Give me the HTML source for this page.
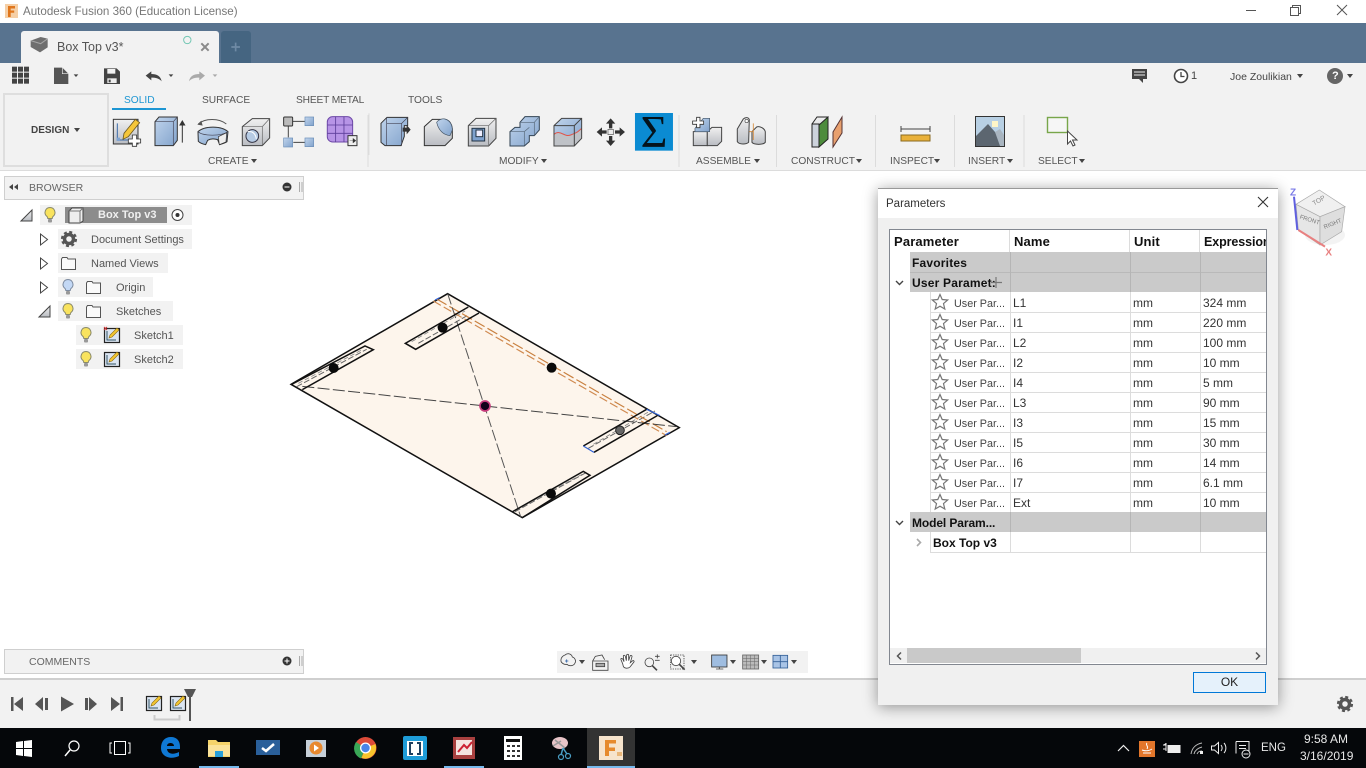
<!DOCTYPE html>
<html><head><meta charset="utf-8"><title>Autodesk Fusion 360</title>
<style>
html,body{margin:0;padding:0;width:1366px;height:768px;overflow:hidden;background:#fff;font-family:"Liberation Sans",sans-serif}
.a,.t{position:absolute}
.t{white-space:nowrap;line-height:14px;font-size:11px;color:#555}
.l{font-size:10.2px}
.r{position:absolute;left:890px;width:376px;height:20px;box-sizing:border-box}
.c{position:absolute;white-space:nowrap;font-size:12px;line-height:14px;color:#333;top:4px}
.u{left:64px;font-size:10.800px;color:#444;top:5px}
.b{position:absolute;white-space:nowrap;font-weight:bold;font-size:12px;letter-spacing:.2px;line-height:14px;color:#111}
.h{font-size:13px;letter-spacing:.15px;top:235px}
svg{position:absolute;overflow:visible}
</style></head><body>
<div class="a" style="left:0;top:0;width:1366px;height:23px;background:#fff"></div>
<div class="a" style="left:0;top:23px;width:1366px;height:40px;background:#58738f"></div>
<div class="a" style="left:21px;top:31px;width:198px;height:32px;background:#f2f2f2;border-radius:3px 3px 0 0"></div>
<div class="a" style="left:221px;top:31px;width:30px;height:32px;background:#456581;border-radius:3px 3px 0 0"></div>
<div class="a" style="left:0;top:63px;width:1366px;height:107px;background:#f2f2f2;border-bottom:1px solid #dcdcdc"></div>
<div class="a" style="left:3px;top:93px;width:102px;height:70px;border:2px solid #dedede"></div>
<div class="a" style="left:112px;top:108px;width:54px;height:2px;background:#1d96d3"></div>
<div class="a" style="left:4px;top:176px;width:298px;height:22px;background:#f2f2f2;border:1px solid #cfcfcf"></div>
<div class="a" style="left:4px;top:649px;width:298px;height:23px;background:#f2f2f2;border:1px solid #cfcfcf"></div>
<div class="a" style="left:0;top:678px;width:1366px;height:2px;background:#cfcfcf"></div>
<div class="a" style="left:0;top:680px;width:1366px;height:48px;background:#f2f2f2"></div>
<div class="a" style="left:0;top:728px;width:1366px;height:40px;background:#05070a"></div>
<div class="a" style="left:587px;top:728px;width:48px;height:40px;background:#333"></div>
<div class="a" style="left:199px;top:766px;width:40px;height:2px;background:#76b9ed"></div>
<div class="a" style="left:444px;top:766px;width:40px;height:2px;background:#76b9ed"></div>
<div class="a" style="left:587px;top:766px;width:48px;height:2px;background:#76b9ed"></div>
<div class="a" style="left:557px;top:651px;width:251px;height:22px;background:#f2f2f2"></div>
<!-- tree row backgrounds -->
<div class="a" style="left:40px;top:205px;width:152px;height:20px;background:#f2f2f2"></div>
<div class="a" style="left:65px;top:207px;width:102px;height:16px;background:#8c8c8c"></div>
<div class="a" style="left:58px;top:229px;width:134px;height:20px;background:#f2f2f2"></div>
<div class="a" style="left:58px;top:253px;width:110px;height:20px;background:#f2f2f2"></div>
<div class="a" style="left:58px;top:277px;width:95px;height:20px;background:#f2f2f2"></div>
<div class="a" style="left:58px;top:301px;width:115px;height:20px;background:#f2f2f2"></div>
<div class="a" style="left:76px;top:325px;width:107px;height:20px;background:#f2f2f2"></div>
<div class="a" style="left:76px;top:349px;width:107px;height:20px;background:#f2f2f2"></div>

<svg style="left:0;top:0" width="1366" height="768" viewBox="0 0 1366 768">
<defs>
<linearGradient id="bl" x1="0" y1="0" x2="1" y2="1"><stop offset="0" stop-color="#c0d4ec"/><stop offset="1" stop-color="#82a3cc"/></linearGradient>
<linearGradient id="gr" x1="0" y1="0" x2="0" y2="1"><stop offset="0" stop-color="#f0f0f0"/><stop offset="1" stop-color="#b9bcc2"/></linearGradient>
<g id="bulbY"><path d="M0-7.5a5 5 0 0 1 3.2 8.8c-.8.7-1 1.4-1 2.2h-4.400c0-.8-.2-1.500-1-2.200A5 5 0 0 1 0-7.500z" fill="#f9e35e" stroke="#8a8a6a"/><rect x="-2" y="4" width="4" height="3.500" rx="1" fill="#999"/></g>
<g id="bulbB"><path d="M0-7.5a5 5 0 0 1 3.2 8.800c-.8.700-1 1.400-1 2.200h-4.400c0-.8-.2-1.500-1-2.200A5 5 0 0 1 0-7.500z" fill="#c3d8f5" stroke="#7d8ba0"/><rect x="-2" y="4" width="4" height="3.500" rx="1" fill="#999"/></g>
<path id="fold" d="M.5 2V12.500H14.500V2H7L6 .5H1.500z" fill="#fafafa" stroke="#555"/>
<g id="ske"><rect x=".5" y="1.500" width="15" height="14" fill="#dbe5f2" stroke="#222" stroke-width="1.200"/><path d="M3 4V13H12" fill="none" stroke="#356" stroke-width="1"/><path d="M5 11l1-3 7-7 2 2-7 7z" fill="#f3c631" stroke="#8a6a10" stroke-width=".6"/></g>
<path id="car" d="M0 0h6l-3 4z" fill="#444"/>
</defs>

<!-- app icon / tab -->
<rect x="5" y="4" width="13" height="14" fill="#f5cfa6"/><path d="M8 6h7v2.500h-4.300v2h3.500v2.300h-3.500V17H8z" fill="#e0761c"/>
<g transform="scale(.3333)">
<path d="M92 122l30-11 21 5v26l-23 15-28-16z" fill="#6e6e6e"/><path d="M92 122l30 9 21-15" fill="none" stroke="#a5a5a5" stroke-width="3"/>
<circle cx="562" cy="120" r="11" fill="none" stroke="#74c7b4" stroke-width="3"/>
<path d="M604 130l22 22M626 130l-22 22" stroke="#8a8a8a" stroke-width="6"/>
<path d="M707 128v26M694 141h26" stroke="#6f8aa5" stroke-width="5"/>
<g fill="#444"><rect x="36" y="200" width="15" height="15"/><rect x="54" y="200" width="15" height="15"/><rect x="72" y="200" width="15" height="15"/><rect x="36" y="218" width="15" height="15"/><rect x="54" y="218" width="15" height="15"/><rect x="72" y="218" width="15" height="15"/><rect x="36" y="236" width="15" height="15"/><rect x="54" y="236" width="15" height="15"/><rect x="72" y="236" width="15" height="15"/></g>
<path d="M162 203h25l18 18v31h-43z" fill="#555"/><path d="M187 203v18h18" fill="none" stroke="#eee" stroke-width="2"/><path d="M221 223h14l-7 8z" fill="#444"/>
<path d="M312 205h38l10 10v37h-48z" fill="#444"/><rect x="322" y="207" width="24" height="14" fill="#f2f2f2"/><rect x="322" y="235" width="28" height="14" fill="#eee"/><rect x="326" y="239" width="6" height="8" fill="#444"/>
<path d="M437 227l17-13v8c16 0 28 6 31 22-8-9-17-11-31-11v8z" fill="#444"/><path d="M506 223h14l-7 8z" fill="#444"/>
<path d="M615 227l-17-13v8c-16 0-28 6-31 22 8-9 17-11 31-11v8z" fill="#aaa"/><path d="M638 223h14l-7 8z" fill="#aaa"/>

<!-- sketch -->
<rect x="340" y="358" width="74" height="74" fill="url(#gr)" stroke="#333" stroke-width="3"/>
<path d="M352 370v50h50" fill="none" stroke="#3a6aa8" stroke-width="3"/><rect x="350" y="413" width="10" height="10" fill="#7fa4d2"/>
<path d="M372 400l34-42 13 10-34 42-16 8z" fill="#f5c63a" stroke="#6e5a20" stroke-width="2.500"/>
<path d="M397 405h13v12h12v12h-12v10h-13v-10h-12v-12h12z" fill="#fff" stroke="#333" stroke-width="2.500"/>
<!-- extrude -->
<path d="M465 365l12-14h55v70l-12 16h-55z" fill="url(#bl)" stroke="#333" stroke-width="3"/><path d="M465 365h55v72M520 365l12-14" fill="none" stroke="#445" stroke-width="2"/>
<path d="M547 428v-62M540 375l7-12 7 12z" stroke="#333" stroke-width="3" fill="#333"/>
<!-- revolve -->
<path d="M595 372c20-18 62-18 84 0" fill="none" stroke="#555" stroke-width="3"/><path d="M604 362l-12 12 16 3z" fill="#555"/>
<path d="M594 395c20-18 70-18 90 0l-3 30c-8 5-16 7-22 9l-6-15c-12-4-22-3-30 2l-6 13c-10-2-18-6-22-10z" fill="url(#bl)" stroke="#333" stroke-width="3"/><path d="M594 395c15 14 70 14 90 0" fill="none" stroke="#445" stroke-width="2"/>
<path d="M655 410l25-12-2 28-20 8z" fill="#eee" stroke="#333" stroke-width="2"/>
<!-- hole -->
<path d="M727 380l30-24h52v58l-22 23h-60z" fill="url(#gr)" stroke="#444" stroke-width="3"/><path d="M727 380h60v57M787 380l22-24" fill="none" stroke="#666" stroke-width="2"/><circle cx="757" cy="408" r="19" fill="#b6cbe4" stroke="#334" stroke-width="3"/><path d="M743 395c14-3 24 6 26 22" fill="none" stroke="#fff" stroke-width="3"/>
<!-- joints -->
<path d="M878 364h38M865 378v34M880 427h36" stroke="#444" stroke-width="3"/>
<rect x="851" y="351" width="27" height="27" rx="3" fill="#bbb" stroke="#333" stroke-width="3"/><rect x="915" y="351" width="26" height="26" fill="url(#bl)" stroke="#6b8eb8" stroke-width="2"/><rect x="851" y="414" width="27" height="27" fill="url(#bl)" stroke="#6b8eb8" stroke-width="2"/><rect x="915" y="414" width="26" height="26" fill="url(#bl)" stroke="#6b8eb8" stroke-width="2"/>
<!-- form -->
<rect x="982" y="350" width="76" height="76" rx="16" fill="#b794e6" stroke="#6e4aa8" stroke-width="3"/>
<path d="M982 375h76M982 400h76M1007 350v76M1032 350v76" stroke="#5c3d99" stroke-width="2.500"/>
<rect x="1044" y="407" width="27" height="30" fill="#eee" stroke="#333" stroke-width="3"/><path d="M1049 422h10v-7l9 7-9 7v-7" fill="#333" stroke="#333"/>
<path d="M1107 340v125" stroke="#dcdcdc" stroke-width="3"/>
</g>

<g transform="translate(370,85) scale(.3333)">
<!-- press pull -->
<path d="M33 115l18-18h62v25l-10 0v32l-10 28H45l-12-10z" fill="url(#bl)" stroke="#333" stroke-width="3"/><path d="M50 97v85M50 115h45v67M95 115l18-18" fill="none" stroke="#445" stroke-width="2"/><path d="M98 128h12v-8l12 14-12 14v-8H98z" fill="#333"/>
<!-- fillet -->
<path d="M163 125L187 103H222C238 103 247 118 247 135V160L225 182H163Z" fill="url(#gr)" stroke="#333" stroke-width="3"/>
<path d="M200 112C205 104 218 100 225 102C240 106 247 120 247 135L240 152C220 150 205 135 200 112Z" fill="url(#bl)" stroke="#456" stroke-width="2"/>
<!-- shell -->
<path d="M295 122l23-22h60v60l-22 23h-61z" fill="url(#gr)" stroke="#444" stroke-width="3"/><path d="M295 122h61v61M356 122l22-22" fill="none" stroke="#666" stroke-width="2"/><rect x="306" y="130" width="38" height="38" fill="#7ea1cd" stroke="#234" stroke-width="3"/><rect x="318" y="135" width="20" height="20" fill="#eef" stroke="#234" stroke-width="3"/>
<!-- combine -->
<path d="M420 140l15-13h15v-15l15-17h43v40l-15 17h-15v18l-15 13h-43z" fill="url(#bl)" stroke="#345" stroke-width="3"/><path d="M420 140h43v42M450 112h43v40M463 140l15-13M493 112l15-17" fill="none" stroke="#567" stroke-width="2"/>
<!-- replace face -->
<path d="M552 122l23-22h60v60l-22 23h-61z" fill="url(#bl)"/><path d="M552 148c20-16 30 10 50 2s20-8 33-20v30l-22 23h-61z" fill="#bfc2c7"/><path d="M552 148c20-16 30 10 50 2s20-8 33-20" fill="none" stroke="#e0554a" stroke-width="3"/><path d="M552 122l23-22h60v60l-22 23h-61zM552 122h61v61M613 122l22-22" fill="none" stroke="#444" stroke-width="3"/>
<!-- move -->
<path d="M722 100l14 16h-9v14h-10v-14h-9zM722 183l14-16h-9v-14h-10v14h-9zM680 141l16-14v9h14v10h-14v9zM765 141l-16-14v9h-14v10h14v9z" fill="#333"/><rect x="714" y="133" width="16" height="16" fill="#eee" stroke="#555" stroke-width="2"/>
<rect x="795" y="84" width="114" height="113" fill="#0b8bd2"/>
<!-- assemble -->
<path d="M970 140h42v42h-42z" fill="url(#gr)" stroke="#444" stroke-width="3"/><path d="M1012 140l14-13h29v42l-13 13h-30z" fill="url(#gr)" stroke="#444" stroke-width="3"/><path d="M1000 100h19v40h-44v-10z" fill="url(#bl)" stroke="#456" stroke-width="2"/><path d="M980 97h10v11h11v10h-11v10h-10v-10h-12v-10h12z" fill="#fff" stroke="#333" stroke-width="2.500"/>
<!-- joint -->
<path d="M1102 170v-38l18-30c6-6 16-6 18 2l-2 68c-6 6-28 8-34-2z" fill="url(#gr)" stroke="#444" stroke-width="3"/><path d="M1146 172v-32l14-14c8-4 24 4 26 14v32c-6 8-34 8-40 0z" fill="url(#gr)" stroke="#444" stroke-width="3"/><path d="M1138 140h12M1150 115v50" stroke="#d58a3a" stroke-width="2.500"/>
<circle cx="1130" cy="108" r="5" fill="#fff" stroke="#444" stroke-width="2"/>
</g>
<path d="M679 115v52M368 115v52M776.500 115v52M875.500 115v52M954.500 115v52M1024 115v52" stroke="#dcdcdc" stroke-width="1"/>

<!-- construct -->
<path d="M812 124l5-7h11l-1 22-9 8h-6z" fill="url(#gr)" stroke="#222" stroke-width="1"/><path d="M819 125l9-8v22l-9 8z" fill="#4d8c3c" stroke="#222"/><rect x="812" y="124" width="7" height="23" fill="#cdd3dc" stroke="#222"/>
<path d="M833 147v-15l9-15v16z" fill="#e8a06e" stroke="#533" stroke-width="1"/>
<!-- inspect -->
<path d="M901 129h29M901 126v6M930 126v6" stroke="#444" stroke-width="1"/><rect x="901" y="135" width="29" height="6" fill="#e9b13a" stroke="#8a6a20"/>
<!-- insert -->
<rect x="975.500" y="116.500" width="29" height="30" fill="#b8d0e4" stroke="#333"/><path d="M976 146v-10l12-12 7 8 9 10v4z" fill="#5c6670"/><path d="M995 132l5-3 4 6v11h-4z" fill="#a9b5c0"/><rect x="992" y="121" width="6" height="6" fill="#fff6c8"/>
<!-- select -->
<rect x="1047.500" y="117.500" width="20" height="15" fill="#f6f6f6" stroke="#78a64a" stroke-width="1.400"/>
<path d="M1067.500 131v13l3-3 2.500 5 2-1-2.500-5h4.500z" fill="#fff" stroke="#444"/>

<!-- top right -->
<path d="M1132 69h15v10h-4v4l-4-4h-7z" fill="#444"/><path d="M1134 72h11M1134 75h11" stroke="#eee"/>
<circle cx="1181" cy="76" r="6.500" fill="#fff" stroke="#444" stroke-width="1.600"/><path d="M1181 72v4.500h3.500" fill="none" stroke="#444" stroke-width="1.300"/>
<use href="#car" x="1297" y="74"/>
<circle cx="1335" cy="76" r="8" fill="#666"/><use href="#car" x="1347" y="74"/>
<!-- window controls -->
<path d="M1246 10.500h10" stroke="#555"/><rect x="1292.500" y="5.500" width="8" height="8" fill="none" stroke="#555"/><rect x="1290.500" y="7.500" width="8" height="8" fill="#fff" stroke="#555"/>
<path d="M1337 5l10 10M1347 5l-10 10" stroke="#555"/>

<!-- design/labels carets -->
<use href="#car" x="74" y="128"/><use href="#car" x="251" y="159"/><use href="#car" x="541" y="159"/><use href="#car" x="754" y="159"/><use href="#car" x="856" y="159"/><use href="#car" x="934" y="159"/><use href="#car" x="1007" y="159"/><use href="#car" x="1079" y="159"/>

<!-- browser -->
<path d="M9 187l4-3v6zM14 187l4-3v6z" fill="#444"/><circle cx="287" cy="187" r="4.500" fill="#333"/><path d="M284.500 187h5" stroke="#fff"/><path d="M299.500 182v10M302 182v10" stroke="#aaa"/>
<circle cx="287" cy="661" r="4.500" fill="#333"/><path d="M284.500 661h5M287 658.500v5" stroke="#fff"/><path d="M299.500 656v10M302 656v10" stroke="#aaa"/>
<!-- tree -->
<path d="M21 221l11-11v11z" fill="url(#gr)" stroke="#444"/>
<use href="#bulbY" x="50" y="215"/>
<path d="M69 211l3-3h11v13l-3 2H69z" fill="#eee" stroke="#444"/><path d="M69 211h11v12M80 211l3-3" fill="none" stroke="#777"/>
<circle cx="177.500" cy="215" r="5.500" fill="#fff" stroke="#444"/><circle cx="177.500" cy="215" r="2" fill="#333"/>
<path d="M40.500 234v11l7-5.500z" fill="#fff" stroke="#444"/><path d="M40.500 258v11l7-5.500z" fill="#fff" stroke="#444"/><path d="M40.500 282v11l7-5.500z" fill="#fff" stroke="#444"/>
<path d="M39 317l11-11v11z" fill="url(#gr)" stroke="#444"/>
<circle cx="69" cy="239" r="4.500" fill="none" stroke="#555" stroke-width="3.500"/><circle cx="69" cy="239" r="7" fill="none" stroke="#555" stroke-width="2.200" stroke-dasharray="3 2.500"/>
<use href="#fold" x="61" y="257"/>
<use href="#bulbB" x="68" y="287"/><use href="#fold" x="86" y="281"/>
<use href="#bulbY" x="68" y="311"/><use href="#fold" x="86" y="305"/>
<use href="#bulbY" x="86" y="335"/><use href="#ske" x="104" y="327"/><path d="M104 327l3 3M107 327l-3 3" stroke="#c33"/>
<use href="#bulbY" x="86" y="359"/><use href="#ske" x="104" y="351"/>

<!-- model -->
<g transform="translate(285,285) scale(.3333)">
<path d="M488 26L1183 428 712 698 18 298z" fill="#fdf5ec" stroke="#111" stroke-width="4.500" stroke-linejoin="miter"/>
<g stroke-width="3" fill="none">
<path d="M35 305l210-112M400 175l150-85M690 680l215-118M910 490l200-112" stroke-dasharray="18 7" stroke="#666" stroke-width="3"/>
<path d="M40 295l190-100M380 170l160-92M705 668l190-102M925 478l170-100" stroke-dasharray="14 8" stroke="#888" stroke-width="2.500"/>
</g>
<path d="M445 48L1145 452" stroke="#d08a50" stroke-width="3.500" stroke-dasharray="26 10" fill="none"/>
<path d="M455 42L1145 440" stroke="#c9803f" stroke-width="3.500" stroke-dasharray="34 10" fill="none"/>
<path d="M52 304L1175 425" stroke="#444" stroke-width="3" stroke-dasharray="36 10" fill="none"/>
<path d="M488 26L707 695" stroke="#555" stroke-width="3" stroke-dasharray="34 9" fill="none"/>
<g fill="none" stroke="#111" stroke-width="4.500">
<path d="M550 66L361 175l31 18L582 84"/>
<path d="M20 298L240 183l25 11L52 314"/>
<path d="M683 680L895 559l20 12L712 698"/>
<path d="M1085 373L895 483M927 502L1117 392"/>
</g>
<path d="M895 483l32 19M1085 373l40 19M1140 450l15-8M450 45l14-7" stroke="#2f62d8" stroke-width="3.500" fill="none"/>
<circle cx="146" cy="249" r="15" fill="#0a0a0a"/><circle cx="473" cy="128" r="15" fill="#0a0a0a"/><circle cx="800" cy="248" r="15" fill="#0a0a0a"/><circle cx="798" cy="626" r="15" fill="#0a0a0a"/>
<circle cx="1005" cy="436" r="13" fill="#666" stroke="#222" stroke-width="3"/>
<circle cx="600" cy="363" r="15" fill="#12001a" stroke="#c73b7c" stroke-width="5"/>
</g>

<!-- viewcube -->
<g transform="translate(1270,175) scale(.3333)">
<ellipse cx="165" cy="180" rx="60" ry="30" fill="#eee" opacity=".7"/>
<path d="M78 88L148 45 225 95 150 125z" fill="#f0f0f0" stroke="#aaa" stroke-width="2"/>
<path d="M78 88L150 125 150 210 85 165z" fill="#e6e6e6" stroke="#aaa" stroke-width="2"/>
<path d="M150 125L225 95 215 170 150 210z" fill="#dedede" stroke="#aaa" stroke-width="2"/>
<path d="M72 65L82 165" stroke="#6060e0" stroke-width="6"/><path d="M85 165L165 215" stroke="#e88080" stroke-width="6"/>
<text x="60" y="62" font-size="30" font-weight="bold" fill="#7b7be8" font-family="Liberation Sans">Z</text>
<text x="166" y="242" font-size="30" font-weight="bold" fill="#e88080" font-family="Liberation Sans">X</text>
<text transform="translate(132,92) rotate(-30)" font-size="20" fill="#888" font-family="Liberation Sans">TOP</text>
<text transform="translate(88,130) rotate(18)" font-size="18" fill="#777" font-family="Liberation Sans">FRONT</text>
<text transform="translate(164,162) rotate(-22)" font-size="18" fill="#777" font-family="Liberation Sans">RIGHT</text>
</g>

<!-- view bar -->
<g transform="translate(550,645) scale(.3333)" fill="none" stroke="#444" stroke-width="2.500">
<path d="M45 30c10-8 20-2 22 6 8 2 12 12 8 18-4 10-18 10-24 4-10 2-20-6-18-14 0-6 6-12 12-14z"/><path d="M45 48h10M50 43v10" stroke="#36a"/>
<path d="M128 48h46v28h-46zM128 48l8-14 20-4 8 14"/><rect x="138" y="55" width="26" height="10" fill="#aaa"/>
<path d="M218 56l-5-12c-2-4 3-5 5-2l4 8-2-16c0-4 5-4 6 0l3 13 1-16c0-4 6-4 6 0l0 16 4-13c1-4 7-3 6 1l-5 18 6-5c4-3 7 1 4 4l-11 14c-5 5-17 5-20-2z" fill="#fff"/>
<circle cx="298" cy="52" r="13"/><path d="M307 62l14 14" stroke-width="5"/><path d="M315 34h14M322 28v12M315 46h14"/>
<rect x="362" y="30" width="40" height="42" stroke-dasharray="4 3"/><circle cx="378" cy="48" r="14" fill="#fff" stroke="#444"/><path d="M388 58l16 16" stroke-width="5"/>
<rect x="485" y="30" width="46" height="36" fill="#9fbde0" stroke="#333"/><path d="M498 72h22M508 66v6"/>
<rect x="578" y="30" width="48" height="42" fill="#bbb" stroke="#666"/><path d="M590 30v42M602 30v42M614 30v42M578 40h48M578 50h48M578 60h48" stroke="#666" stroke-width="1.500"/>
<rect x="669" y="31" width="44" height="38" fill="#a9c4e6" stroke="#335f96"/><path d="M691 31v38M669 50h44" stroke="#335f96"/>
</g>
<use href="#car" x="579" y="660"/><use href="#car" x="691" y="660"/><use href="#car" x="730" y="660"/><use href="#car" x="761" y="660"/><use href="#car" x="791" y="660"/>

<!-- timeline -->
<g fill="#555">
<path d="M11 697h2.500v14H11zM23 697v14l-9-7z"/><path d="M35 704l8-7v14zM45 698h3v12h-3z"/><path d="M61 696.500l13 7.500-13 7.500z"/><path d="M85 698h3v12h-3zM89 697l8 7-8 7z"/><path d="M111 697l9 7-9 7zM120.500 697h2.500v14h-2.500z"/>
</g>
<use href="#ske" x="146" y="695"/><use href="#ske" x="170" y="695"/>
<path d="M154.500 715v4.500h25v-4.500" fill="none" stroke="#ccc" stroke-width="2"/>
<path d="M184 689h12l-4 8h-4z" fill="#555"/><rect x="189" y="694" width="2" height="27" fill="#555"/>
<circle cx="1345" cy="704" r="4.500" fill="none" stroke="#555" stroke-width="3.500"/><circle cx="1345" cy="704" r="7" fill="none" stroke="#555" stroke-width="2.200" stroke-dasharray="3 2.500"/>

<!-- taskbar -->
<path d="M16 742l7-1v7h-7zM24 741l8-1v8h-8zM16 749h7v7l-7-1zM24 749h8v8l-8-1z" fill="#fff"/>
<circle cx="74" cy="746" r="5" fill="none" stroke="#fff" stroke-width="1.200"/><path d="M70 750l-5 6" stroke="#fff" stroke-width="1.500"/>
<rect x="114.500" y="741.500" width="11" height="13" fill="none" stroke="#fff"/><path d="M112 743h-2v10h2M128 743h2v10h-2" fill="none" stroke="#fff"/>
<path d="M161 748c0-7 4-11 10-11 6 0 9 4 9 10v2h-13c.5 5 6 6 12 3v4c-8 4-18 1-18-8zm6-2h7c0-4-7-4-7 0z" fill="#0f78d4"/>
<path d="M208 740h8l2 2h12v15h-22z" fill="#f5d36a"/><rect x="208" y="745" width="22" height="11" fill="#fbe39a"/><rect x="215" y="751" width="8" height="6" fill="#2aa0d8"/>
<rect x="256" y="740" width="24" height="15" fill="#2a5f9a"/><path d="M262 748l4 3 8-7" fill="none" stroke="#fff" stroke-width="2.500"/>
<rect x="306" y="740" width="20" height="17" fill="#c6cfd8"/><circle cx="316" cy="748" r="6.500" fill="#e8892f"/><path d="M314 744.500l5 3.500-5 3.500z" fill="#fff"/>
<circle cx="365.500" cy="748" r="11" fill="#dd4b39"/><path d="M365.500 748L356 742a11 11 0 0 0 5 16.500z" fill="#3aa757"/><path d="M365.500 748l10-4a11 11 0 0 1-14 14z" fill="#f8c42c"/><path d="M365.500 748l-5 9a11 11 0 0 1-6-11z" fill="#3aa757"/><circle cx="365.500" cy="748" r="5.500" fill="#fff"/><circle cx="365.500" cy="748" r="4.200" fill="#4a85e8"/>
<rect x="403" y="736" width="24" height="24" rx="2" fill="#1e9cd8"/><rect x="407" y="741" width="16" height="15" fill="#fff"/><path d="M413 743h-3v11h3M417 743h3v11h-3" fill="none" stroke="#1d3f5f" stroke-width="2"/>
<rect x="453" y="737" width="22" height="22" fill="#a8403f"/><rect x="456" y="740" width="16" height="15" fill="#f4e4e0"/><path d="M458 752l6-7 3 3 5-6" stroke="#c23" stroke-width="2" fill="none"/>
<rect x="504" y="736" width="18" height="24" fill="#fff"/><rect x="506" y="739" width="14" height="3" fill="#111"/><g fill="#333"><rect x="507" y="745" width="3" height="2"/><rect x="512" y="745" width="3" height="2"/><rect x="517" y="745" width="3" height="2"/><rect x="507" y="750" width="3" height="2"/><rect x="512" y="750" width="3" height="2"/><rect x="517" y="750" width="3" height="2"/><rect x="507" y="755" width="3" height="2"/><rect x="512" y="755" width="3" height="2"/><rect x="517" y="755" width="3" height="2"/></g>
<ellipse cx="560" cy="743" rx="8" ry="6" fill="#e8c4c8"/><path d="M553 746l8-5M555 740l10 8" stroke="#999" stroke-width="1.500"/><path d="M563 748l4 6M563 748l-2 7" stroke="#4a9ec4" stroke-width="1.500"/><circle cx="568" cy="756" r="2.500" fill="none" stroke="#4a9ec4" stroke-width="1.200"/><circle cx="561" cy="757" r="2.500" fill="none" stroke="#4a9ec4" stroke-width="1.200"/>
<rect x="599" y="736" width="24" height="24" fill="#f6e3cc"/><path d="M605 740h11v3.500h-7v4h6v3.500h-6v5h-4z" fill="#e68a2e"/><rect x="617" y="752" width="5" height="4" fill="#e9b679"/>

<!-- tray -->
<path d="M1118 751l5.500-5.500 5.500 5.500" fill="none" stroke="#eee" stroke-width="1.200"/>
<rect x="1139" y="741" width="16" height="16" fill="#e2762b"/><path d="M1143 753h8M1142 750c3 1 7 1 10-1M1147 743c-2 2 2 3 0 6" stroke="#fff" fill="none"/>
<path d="M1163 745h3v-2M1163 749h3M1166 743v8" fill="#eee" stroke="#eee"/><rect x="1168" y="745.500" width="12" height="7" fill="#eee" stroke="#eee"/>
<path d="M1191 754c1-6 5-10 11-11M1194 754c1-4 4-6 8-7M1197 754c1-2 2-3 5-3" stroke="#bbb" fill="none"/><rect x="1200" y="751" width="3" height="3" fill="#eee"/>
<path d="M1211.500 746h3l4-3.500v11l-4-3.500h-3zM1221 745c1.500 2 1.500 4 0 6M1224 743c2.500 3 2.500 7 0 10" stroke="#eee" fill="none"/>
<path d="M1236 741.500h13v13h-7M1239 745.500h7M1239 748.500h7M1236 741.500v12" stroke="#eee" fill="none"/><circle cx="1246" cy="754" r="4" fill="#05070a" stroke="#eee"/><path d="M1243.500 754h5" stroke="#eee"/>
</svg>

<!-- texts -->
<div class="t" style="left:23px;top:5px;font-size:11.600px;color:#777">Autodesk Fusion 360 (Education License)</div>
<div class="t" style="left:57px;top:40px;font-size:12.500px;color:#555">Box Top v3*</div>
<div class="t" style="left:31px;top:124px;font-weight:bold;font-size:10px;color:#444">DESIGN</div>
<div class="t l" style="left:124px;top:94px;color:#1d96d3">SOLID</div>
<div class="t l" style="left:202px;top:94px">SURFACE</div>
<div class="t l" style="left:296px;top:94px;letter-spacing:-.15px">SHEET METAL</div>
<div class="t l" style="left:408px;top:94px">TOOLS</div>
<div class="t l" style="left:208px;top:155px">CREATE</div>
<div class="t l" style="left:499px;top:155px">MODIFY</div>
<div class="t l" style="left:696px;top:155px">ASSEMBLE</div>
<div class="t l" style="left:791px;top:155px">CONSTRUCT</div>
<div class="t l" style="left:890px;top:155px">INSPECT</div>
<div class="t l" style="left:968px;top:155px">INSERT</div>
<div class="t l" style="left:1038px;top:155px">SELECT</div>
<div class="t" style="left:635px;top:113px;width:38px;height:38px;line-height:38px;text-align:center;font-family:'Liberation Serif',serif;font-size:46px;color:#05131c">Σ</div>
<div class="t" style="left:1191px;top:69px;color:#444">1</div>
<div class="t" style="left:1230px;top:70px;font-size:10.500px;color:#444">Joe Zoulikian</div>
<div class="t" style="left:1332px;top:69px;font-weight:bold;font-size:11px;color:#fff">?</div>
<div class="t" style="left:29px;top:181px;font-size:10.500px;color:#666">BROWSER</div>
<div class="t" style="left:29px;top:655px;font-size:10.500px;color:#666">COMMENTS</div>
<div class="t" style="left:98px;top:208px;font-weight:bold;color:#f0f0f0">Box Top v3</div>
<div class="t" style="left:91px;top:233px">Document Settings</div>
<div class="t" style="left:91px;top:257px">Named Views</div>
<div class="t" style="left:116px;top:281px">Origin</div>
<div class="t" style="left:116px;top:305px">Sketches</div>
<div class="t" style="left:134px;top:329px">Sketch1</div>
<div class="t" style="left:134px;top:353px">Sketch2</div>
<div class="t" style="left:1261px;top:741px;font-size:11.500px;color:#e8e8e8">ENG</div>
<div class="t" style="left:1304px;top:732px;font-size:12px;color:#e8e8e8">9:58 AM</div>
<div class="t" style="left:1300px;top:749px;font-size:12px;color:#e8e8e8">3/16/2019</div>

<!-- dialog -->
<div class="a" style="left:878px;top:188px;width:400px;height:517px;background:#f0f0f0;box-shadow:0 2px 14px rgba(0,0,0,.4);border-top:1px solid #999;box-sizing:border-box">
<div class="a" style="left:-878px;top:-189px;width:1366px;height:768px">
<div class="a" style="left:878px;top:189px;width:400px;height:29px;background:#fff"></div>
<div class="t" style="left:886px;top:197px;font-size:11.500px;color:#333">Parameters</div>
<svg style="left:0;top:0" width="1366" height="768"><path d="M1258 197l10 10M1268 197l-10 10" stroke="#333" stroke-width="1.100"/></svg>
<div class="a" style="left:889px;top:229px;width:376px;height:434px;border:1px solid #828790;background:#fff;overflow:hidden">
<div class="a" style="left:-890px;top:-230px;width:1366px;height:768px">
<div class="b h" style="left:894px">Parameter</div>
<div class="b h" style="left:1014px">Name</div>
<div class="b h" style="left:1134px">Unit</div>
<div class="b h" style="left:1204px;letter-spacing:-.1px;font-size:12.500px">Expression</div>
<div class="a" style="left:1009px;top:230px;width:1px;height:22px;background:#dcdcdc"></div>
<div class="a" style="left:1129px;top:230px;width:1px;height:22px;background:#dcdcdc"></div>
<div class="a" style="left:1199px;top:230px;width:1px;height:22px;background:#dcdcdc"></div>

<div class="a" style="left:910px;top:252px;width:360px;height:40px;background:#cacaca"></div>
<div class="a" style="left:910px;top:512px;width:360px;height:20px;background:#cacaca"></div>
<div class="a" style="left:910px;top:272px;width:360px;height:1px;background:#b9b9b9"></div>
<div class="b" style="left:912px;top:256px">Favorites</div>
<div class="b" style="left:912px;top:276px">User Paramet:</div>
<div class="b" style="left:912px;top:516px;letter-spacing:-.1px">Model Param...</div>
<div class="b" style="left:933px;top:536px;letter-spacing:0">Box Top v3</div>

<div class="a" style="left:1010px;top:252px;width:1px;height:300px;background:#dcdcdc"></div>
<div class="a" style="left:1130px;top:252px;width:1px;height:300px;background:#dcdcdc"></div>
<div class="a" style="left:1200px;top:252px;width:1px;height:300px;background:#dcdcdc"></div>
<div class="a" style="left:930px;top:292px;width:1px;height:220px;background:#dcdcdc"></div>
<div class="a" style="left:930px;top:532px;width:1px;height:20px;background:#dcdcdc"></div>
<div class="a" style="left:1010px;top:252px;width:1px;height:40px;background:#b5b5b5"></div>
<div class="a" style="left:1130px;top:252px;width:1px;height:40px;background:#b5b5b5"></div>
<div class="a" style="left:1200px;top:252px;width:1px;height:40px;background:#b5b5b5"></div>
<div class="a" style="left:1010px;top:512px;width:1px;height:20px;background:#b5b5b5"></div>
<div class="a" style="left:1130px;top:512px;width:1px;height:20px;background:#b5b5b5"></div>
<div class="a" style="left:1200px;top:512px;width:1px;height:20px;background:#b5b5b5"></div>
<div class="a" style="left:930px;top:312px;width:340px;height:1px;background:#dcdcdc"></div>
<div class="a" style="left:930px;top:332px;width:340px;height:1px;background:#dcdcdc"></div>
<div class="a" style="left:930px;top:352px;width:340px;height:1px;background:#dcdcdc"></div>
<div class="a" style="left:930px;top:372px;width:340px;height:1px;background:#dcdcdc"></div>
<div class="a" style="left:930px;top:392px;width:340px;height:1px;background:#dcdcdc"></div>
<div class="a" style="left:930px;top:412px;width:340px;height:1px;background:#dcdcdc"></div>
<div class="a" style="left:930px;top:432px;width:340px;height:1px;background:#dcdcdc"></div>
<div class="a" style="left:930px;top:452px;width:340px;height:1px;background:#dcdcdc"></div>
<div class="a" style="left:930px;top:472px;width:340px;height:1px;background:#dcdcdc"></div>
<div class="a" style="left:930px;top:492px;width:340px;height:1px;background:#dcdcdc"></div>
<div class="a" style="left:930px;top:552px;width:340px;height:1px;background:#dcdcdc"></div>

<div class="r" style="top:292px"><span class="c u">User Par...</span><span class="c" style="left:123px">L1</span><span class="c" style="left:243px">mm</span><span class="c" style="left:313px">324 mm</span></div>
<div class="r" style="top:312px"><span class="c u">User Par...</span><span class="c" style="left:123px">I1</span><span class="c" style="left:243px">mm</span><span class="c" style="left:313px">220 mm</span></div>
<div class="r" style="top:332px"><span class="c u">User Par...</span><span class="c" style="left:123px">L2</span><span class="c" style="left:243px">mm</span><span class="c" style="left:313px">100 mm</span></div>
<div class="r" style="top:352px"><span class="c u">User Par...</span><span class="c" style="left:123px">I2</span><span class="c" style="left:243px">mm</span><span class="c" style="left:313px">10 mm</span></div>
<div class="r" style="top:372px"><span class="c u">User Par...</span><span class="c" style="left:123px">I4</span><span class="c" style="left:243px">mm</span><span class="c" style="left:313px">5 mm</span></div>
<div class="r" style="top:392px"><span class="c u">User Par...</span><span class="c" style="left:123px">L3</span><span class="c" style="left:243px">mm</span><span class="c" style="left:313px">90 mm</span></div>
<div class="r" style="top:412px"><span class="c u">User Par...</span><span class="c" style="left:123px">I3</span><span class="c" style="left:243px">mm</span><span class="c" style="left:313px">15 mm</span></div>
<div class="r" style="top:432px"><span class="c u">User Par...</span><span class="c" style="left:123px">I5</span><span class="c" style="left:243px">mm</span><span class="c" style="left:313px">30 mm</span></div>
<div class="r" style="top:452px"><span class="c u">User Par...</span><span class="c" style="left:123px">I6</span><span class="c" style="left:243px">mm</span><span class="c" style="left:313px">14 mm</span></div>
<div class="r" style="top:472px"><span class="c u">User Par...</span><span class="c" style="left:123px">I7</span><span class="c" style="left:243px">mm</span><span class="c" style="left:313px">6.1 mm</span></div>
<div class="r" style="top:492px"><span class="c u">User Par...</span><span class="c" style="left:123px">Ext</span><span class="c" style="left:243px">mm</span><span class="c" style="left:313px">10 mm</span></div>

<svg style="left:0;top:0" width="1366" height="768">
<defs><path id="st" d="M8 .5L10.200 5.500 15.700 6 11.500 9.600 12.800 15 8 12.200 3.200 15 4.500 9.600.3 6 5.800 5.500Z" fill="#fff" stroke="#777" stroke-width="1.200"/></defs>
<use href="#st" x="932" y="294"/><use href="#st" x="932" y="314"/><use href="#st" x="932" y="334"/><use href="#st" x="932" y="354"/><use href="#st" x="932" y="374"/><use href="#st" x="932" y="394"/><use href="#st" x="932" y="414"/><use href="#st" x="932" y="434"/><use href="#st" x="932" y="454"/><use href="#st" x="932" y="474"/><use href="#st" x="932" y="494"/>
<path d="M896 281l3.500 3.500 3.500-3.500M896 521l3.500 3.500 3.500-3.500" fill="none" stroke="#444" stroke-width="1.400"/>
<path d="M917 539l3.500 3.500-3.500 3.500" fill="none" stroke="#aaa" stroke-width="1.600"/>
<path d="M996 277v11M991 282.500h11" stroke="#777" stroke-width="1.200"/>
</svg>

<div class="a" style="left:890px;top:648px;width:376px;height:15px;background:#f0f0f0"></div>
<div class="a" style="left:907px;top:648px;width:174px;height:15px;background:#c9c9c9"></div>
<svg style="left:0;top:0" width="1366" height="768"><path d="M901 652.500l-3.500 3.500 3.500 3.500M1256 652.500l3.500 3.500-3.500 3.500" fill="none" stroke="#555" stroke-width="1.500"/></svg>
</div>
</div>
<div class="a" style="left:1193px;top:672px;width:71px;height:19px;background:#e5f1fb;border:1px solid #0078d7;text-align:center;font-size:12px;line-height:19px;color:#222">OK</div>
</div>
</div>
</body></html>
